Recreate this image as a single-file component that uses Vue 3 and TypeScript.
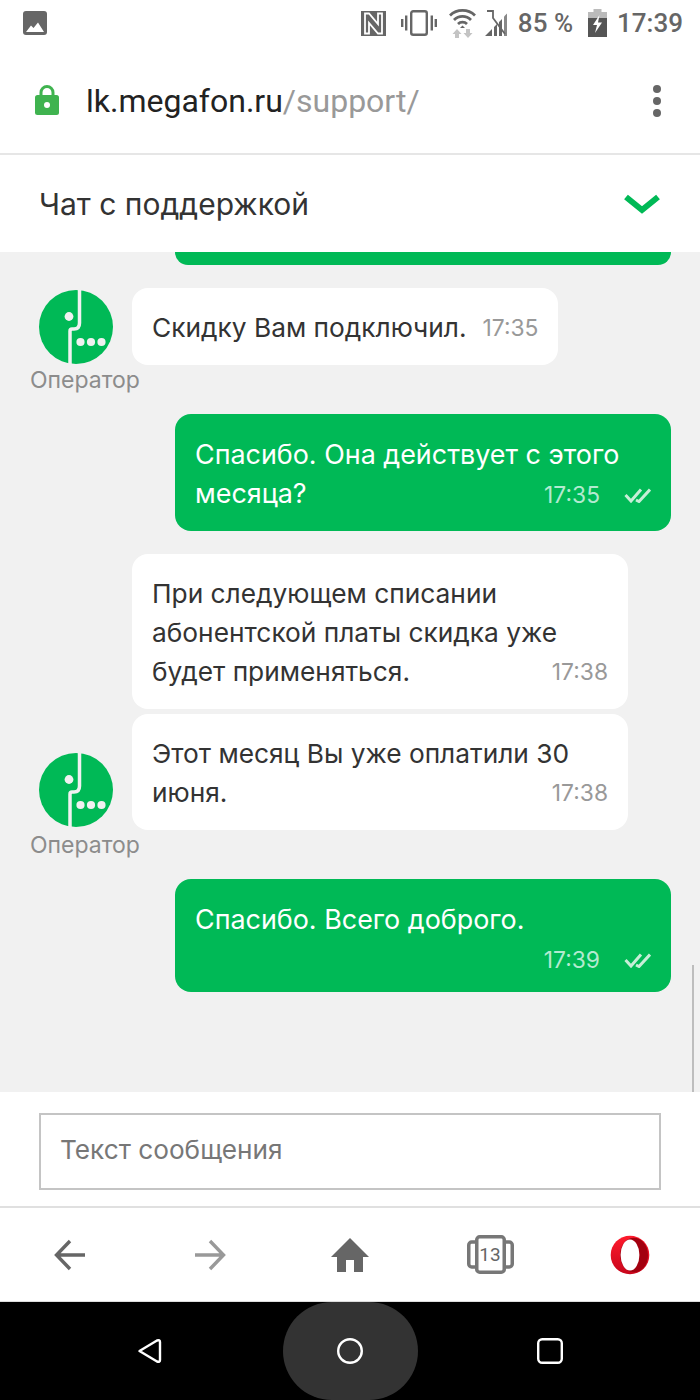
<script setup lang="ts">
interface Bubble {
  text: string;
  time: string;
}

interface ChatBlock {
  id: number;
  from: 'operator' | 'me';
  bubbles: Bubble[];
  tall?: boolean;
}

const blocks: ChatBlock[] = [
  { id: 1, from: 'operator', bubbles: [{ text: 'Скидку Вам подключил.', time: '17:35' }] },
  { id: 2, from: 'me', bubbles: [{ text: 'Спасибо. Она действует с этого месяца?', time: '17:35' }] },
  {
    id: 3,
    from: 'operator',
    tall: true,
    bubbles: [
      { text: 'При следующем списании абонентской платы скидка уже будет применяться.', time: '17:38' },
      { text: 'Этот месяц Вы уже оплатили 30 июня.', time: '17:38' },
    ],
  },
  { id: 4, from: 'me', bubbles: [{ text: 'Спасибо. Всего доброго.', time: '17:39' }] },
];
</script>

<template>
  <div class="phone">
    <header class="status">
      <svg class="status__photo" width="24" height="24" viewBox="0 0 24 24">
        <rect width="24" height="24" rx="3" fill="#666" />
        <path d="M3 21 L8 14.5 L10.5 17 L15 11.5 L21 21 Z" fill="#fff" />
      </svg>
      <div class="status__right">
        <svg class="status__nfc" width="25" height="25" viewBox="0 0 25 25">
          <rect width="25" height="25" fill="#666" />
          <path d="M4 2.5 H8 L17 13 V2.5 H21 V22.5 H17 L8 12 V22.5 H4 Z" fill="none" stroke="#fff" stroke-width="1.8" />
        </svg>
        <svg class="status__vibrate" width="36" height="26" viewBox="0 0 36 26">
          <rect x="10.2" y="1.2" width="15.6" height="23.6" rx="2" fill="none" stroke="#666" stroke-width="2.4" />
          <path d="M1.2 9 V17 M5.2 5.5 V20.5 M30.8 5.5 V20.5 M34.8 9 V17" stroke="#666" stroke-width="2.4" fill="none" />
        </svg>
        <svg class="status__wifi" width="27" height="29" viewBox="0 0 27 29">
          <path d="M1 6.5 A18 18 0 0 1 26 6.5 M5 11 A12 12 0 0 1 22 11 M9 15 A6.5 6.5 0 0 1 18 15" fill="none" stroke="#666" stroke-width="2.8" />
          <path d="M13.5 16.5 L11 19 L16 19 Z" fill="#666" />
          <path d="M8 20 L3.5 25 H6 V29 H10 V25 H12.5 Z M19 29 L14.5 24 H17 V20 H21 V24 H23.5 Z" fill="#c4c4c4" />
        </svg>
        <svg class="status__signal" width="23" height="26" viewBox="0 0 23 26">
          <path d="M0 26 L7 19 V26 Z M9 17 L12 14 V26 H9 Z M14 12 L17 9 V26 H14 Z" fill="#666" />
          <path d="M19 6.5 L22 3.5 V26 H19 Z" fill="#888" />
          <path d="M2 1 H8 V8 L20 24" fill="none" stroke="#666" stroke-width="1.8" />
        </svg>
        <span class="status__text status__percent">85 %</span>
        <svg class="status__battery" width="19" height="28" viewBox="0 0 19 28">
          <path d="M5.5 0 H13.5 V3 H19 V10 H0 V3 H5.5 Z" fill="#bbb" />
          <rect y="9" width="19" height="19" fill="#555" />
          <path d="M11.5 6 L5 16 H9 L7 24 L14 13.5 H10 Z" fill="#fff" />
        </svg>
        <span class="status__text status__time">17:39</span>
      </div>
    </header>

    <section class="urlbar">
      <svg width="24" height="32" viewBox="0 0 24 32">
        <path d="M6 13 V8.5 A6 6 0 0 1 18 8.5 V13" fill="none" stroke="#3fb34f" stroke-width="3" />
        <rect y="11" width="24" height="20" rx="2.5" fill="#3fb34f" />
        <circle cx="12" cy="21" r="3" fill="#fff" />
      </svg>
      <div class="urlbar__address">lk.megafon.ru<span class="urlbar__path">/support/</span></div>
      <div class="urlbar__menu"><i></i><i></i><i></i></div>
    </section>

    <section class="chat-title">
      <span>Чат с поддержкой</span>
      <svg width="36" height="20" viewBox="0 0 36 20">
        <path d="M2 3 L18 16 L34 3" fill="none" stroke="#00b956" stroke-width="6" />
      </svg>
    </section>

    <main class="chat">
      <div class="chat__stub"></div>

      <template v-for="block in blocks" :key="block.id">
        <div v-if="block.from === 'operator'" class="operator">
          <svg class="operator__avatar" :class="{ 'operator__avatar--tall': block.tall }" width="74" height="74" viewBox="0 0 74 74">
            <circle cx="37" cy="37" r="37" fill="#00b956" />
            <path d="M40.5 0 V33 Q40.5 39 35 39 H33 Q31 39 31 41 V74" fill="none" stroke="#f1f1f1" stroke-width="3.5" />
            <circle cx="30" cy="26.5" r="4.4" fill="#f1f1f1" />
            <circle cx="41.5" cy="52" r="4.1" fill="#f1f1f1" />
            <circle cx="52" cy="52" r="4.1" fill="#f1f1f1" />
            <circle cx="62.5" cy="52" r="4.1" fill="#f1f1f1" />
          </svg>
          <div class="operator__bubbles">
            <div v-for="bubble in block.bubbles" :key="bubble.text" class="bubble bubble--white">
              {{ bubble.text }}<span class="bubble__meta"><span>{{ bubble.time }}</span></span>
            </div>
          </div>
          <div class="operator__label">Оператор</div>
        </div>

        <div v-else v-for="bubble in block.bubbles" :key="bubble.text" class="bubble bubble--green">
          {{ bubble.text }}<span class="bubble__meta">
            <span>{{ bubble.time }}</span>
            <svg width="27" height="16" viewBox="0 0 27 16">
              <path d="M1.5 8 L7 14 L17 2.5 M12 13 L15 14.5 L26 2.5" fill="none" stroke="#c6eed7" stroke-width="3" />
            </svg>
          </span>
        </div>
      </template>

      <div class="chat__scroll"></div>
    </main>

    <section class="composer">
      <div class="composer__box">Текст сообщения</div>
    </section>

    <nav class="toolbar">
      <svg width="32" height="32" viewBox="0 0 32 32">
        <path d="M31 16 H3 M16 2 L2.5 16 L16 30" fill="none" stroke="#666" stroke-width="3.4" />
      </svg>
      <svg width="32" height="32" viewBox="0 0 32 32">
        <path d="M1 16 H29 M16 2 L29.5 16 L16 30" fill="none" stroke="#999" stroke-width="3.4" />
      </svg>
      <svg width="38" height="34" viewBox="0 0 38 34">
        <path d="M19 0 L38 19 H32 V34 H23 V22 H15 V34 H6 V19 H0 Z" fill="#666" />
      </svg>
      <div class="toolbar__tabs">
        <svg width="47" height="39" viewBox="0 0 47 39">
          <rect x="1.75" y="7" width="43.5" height="25" rx="3" fill="none" stroke="#777" stroke-width="3.5" />
          <rect x="9.75" y="1.75" width="27.5" height="35.5" rx="3" fill="#fff" stroke="#777" stroke-width="3.5" />
        </svg>
        <span>13</span>
      </div>
      <svg width="40" height="40" viewBox="0 0 40 40">
        <defs>
          <linearGradient id="operaRing" x1="0" y1="0" x2="0" y2="1">
            <stop offset="0" stop-color="#ff1b2d" />
            <stop offset="1" stop-color="#c8061c" />
          </linearGradient>
        </defs>
        <circle cx="20" cy="20" r="19.3" fill="url(#operaRing)" />
        <ellipse cx="24" cy="20" rx="14" ry="17.2" fill="#a3000f" />
        <ellipse cx="20" cy="20" rx="9.4" ry="15.6" fill="#fff" />
      </svg>
    </nav>

    <footer class="navbar">
      <div class="navbar__item">
        <svg width="28" height="28" viewBox="0 0 28 28">
          <path d="M3.5 14 L21 3.5 Q24 2.5 24 5 V23 Q24 25.5 21 24.5 Z" fill="none" stroke="#fff" stroke-width="2.4" stroke-linejoin="round" />
        </svg>
      </div>
      <div class="navbar__item navbar__item--home">
        <svg width="28" height="28" viewBox="0 0 28 28">
          <circle cx="14" cy="14" r="11.8" fill="none" stroke="#fff" stroke-width="2.4" />
        </svg>
      </div>
      <div class="navbar__item">
        <svg width="28" height="28" viewBox="0 0 28 28">
          <rect x="2.2" y="2.2" width="23.6" height="23.6" rx="4" fill="none" stroke="#fff" stroke-width="2.4" />
        </svg>
      </div>
    </footer>
  </div>
</template>

<style>
html,
body {
  margin: 0;
  background: #fff;
}
</style>

<style scoped>
.phone {
  width: 700px;
  height: 1400px;
  display: flex;
  flex-direction: column;
  overflow: hidden;
  font-family: Roboto, 'Liberation Sans', sans-serif;
  color: #333;
}

.status {
  height: 46px;
  padding: 0 17px 0 23px;
  display: flex;
  align-items: center;
  justify-content: space-between;
  flex: none;
}

.status__right {
  display: flex;
  align-items: center;
}

.status__vibrate {
  margin-left: 15px;
}

.status__wifi {
  margin-left: 12px;
}

.status__signal {
  margin-left: 9px;
}

.status__text {
  font-size: 26px;
  font-weight: 500;
  color: #666;
}

.status__percent {
  margin-left: 10px;
}

.status__battery {
  margin-left: 15px;
}

.status__time {
  margin-left: 10px;
}

.urlbar {
  height: 109px;
  padding: 0 39px 0 35px;
  display: flex;
  align-items: center;
  flex: none;
  box-sizing: border-box;
  border-bottom: 2px solid #e6e6e6;
}

.urlbar__address {
  margin: 3px 0 0 27px;
  font-size: 32px;
  color: #222;
  flex: 1;
}

.urlbar__path {
  color: #999;
}

.urlbar__menu {
  margin-top: 2px;
  display: flex;
  flex-direction: column;
  gap: 4px;
}

.urlbar__menu i {
  display: block;
  width: 8px;
  height: 8px;
  border-radius: 50%;
  background: #666;
}

.chat-title {
  height: 97px;
  padding: 1px 40px 0 39px;
  box-sizing: border-box;
  display: flex;
  align-items: center;
  justify-content: space-between;
  flex: none;
  font-family: Inter, Roboto, sans-serif;
  font-size: 30px;
  color: #333;
}

.chat {
  position: relative;
  flex: 1;
  background: #f1f1f1;
  overflow: hidden;
  font-size: 26.3px;
  line-height: 39px;
  font-family: Inter, Roboto, sans-serif;
}

.chat__stub {
  width: 496px;
  height: 13px;
  margin-left: 175px;
  background: #00b956;
  border-radius: 0 0 16px 16px;
}

.chat__scroll {
  position: absolute;
  right: 6px;
  bottom: 0;
  width: 2px;
  height: 127px;
  background: #bdbdbd;
}

.operator {
  margin-top: 23px;
  display: grid;
  grid-template-columns: 132px 496px;
}

.operator__avatar {
  margin: 0 0 1px 39px;
  align-self: end;
}

.operator__avatar--tall {
  margin-bottom: 3px;
}

.operator__bubbles {
  display: flex;
  flex-direction: column;
  align-items: flex-start;
  gap: 5px;
}

.operator__label {
  grid-column: 1 / 3;
  padding-left: 30px;
  font-size: 23px;
  line-height: 30px;
  color: #8c8c8c;
}

.bubble {
  box-sizing: border-box;
  padding: 20px 20px 18px;
  border-radius: 16px;
  display: flow-root;
}

.bubble--white {
  background: #fff;
  color: #333;
}

.bubble--green {
  width: 496px;
  margin: 19px 0 0 175px;
  padding-top: 21px;
  font-size: 26.9px;
  background: #00b956;
  color: #fff;
}

.bubble__meta {
  float: right;
  margin-left: 16px;
  display: flex;
  align-items: center;
  gap: 24px;
  font-size: 22.8px;
  line-height: 39px;
  color: #999;
}

.bubble--green .bubble__meta {
  margin: 0 0 -3px 26px;
  padding-top: 3px;
  line-height: 35px;
  color: #b3ead0;
}

.composer {
  height: 116px;
  padding: 21px 39px 0;
  box-sizing: border-box;
  flex: none;
  border-bottom: 2px solid #e0e0e0;
}

.composer__box {
  height: 77px;
  box-sizing: border-box;
  padding: 0 19px 5px;
  border: 2px solid #c4c4c4;
  display: flex;
  align-items: center;
  font-family: Inter, Roboto, sans-serif;
  font-size: 26.2px;
  color: #777;
}

.toolbar {
  height: 94px;
  box-sizing: border-box;
  flex: none;
  display: grid;
  grid-template-columns: repeat(5, 140px);
  align-items: center;
  justify-items: center;
  border-bottom: 1px solid #ddd;
}

.toolbar__tabs {
  position: relative;
  width: 47px;
  height: 39px;
}

.toolbar__tabs span {
  position: absolute;
  inset: 0;
  text-align: center;
  font-size: 19px;
  line-height: 39px;
  color: #666;
}

.navbar {
  height: 98px;
  flex: none;
  background: #000;
  padding: 0 50px;
  display: grid;
  grid-template-columns: repeat(3, 200px);
  align-items: center;
  justify-items: center;
}

.navbar__item {
  display: flex;
  align-items: center;
  justify-content: center;
}

.navbar__item--home {
  width: 135px;
  height: 98px;
  border-radius: 68px;
  background: #333;
}
</style>
